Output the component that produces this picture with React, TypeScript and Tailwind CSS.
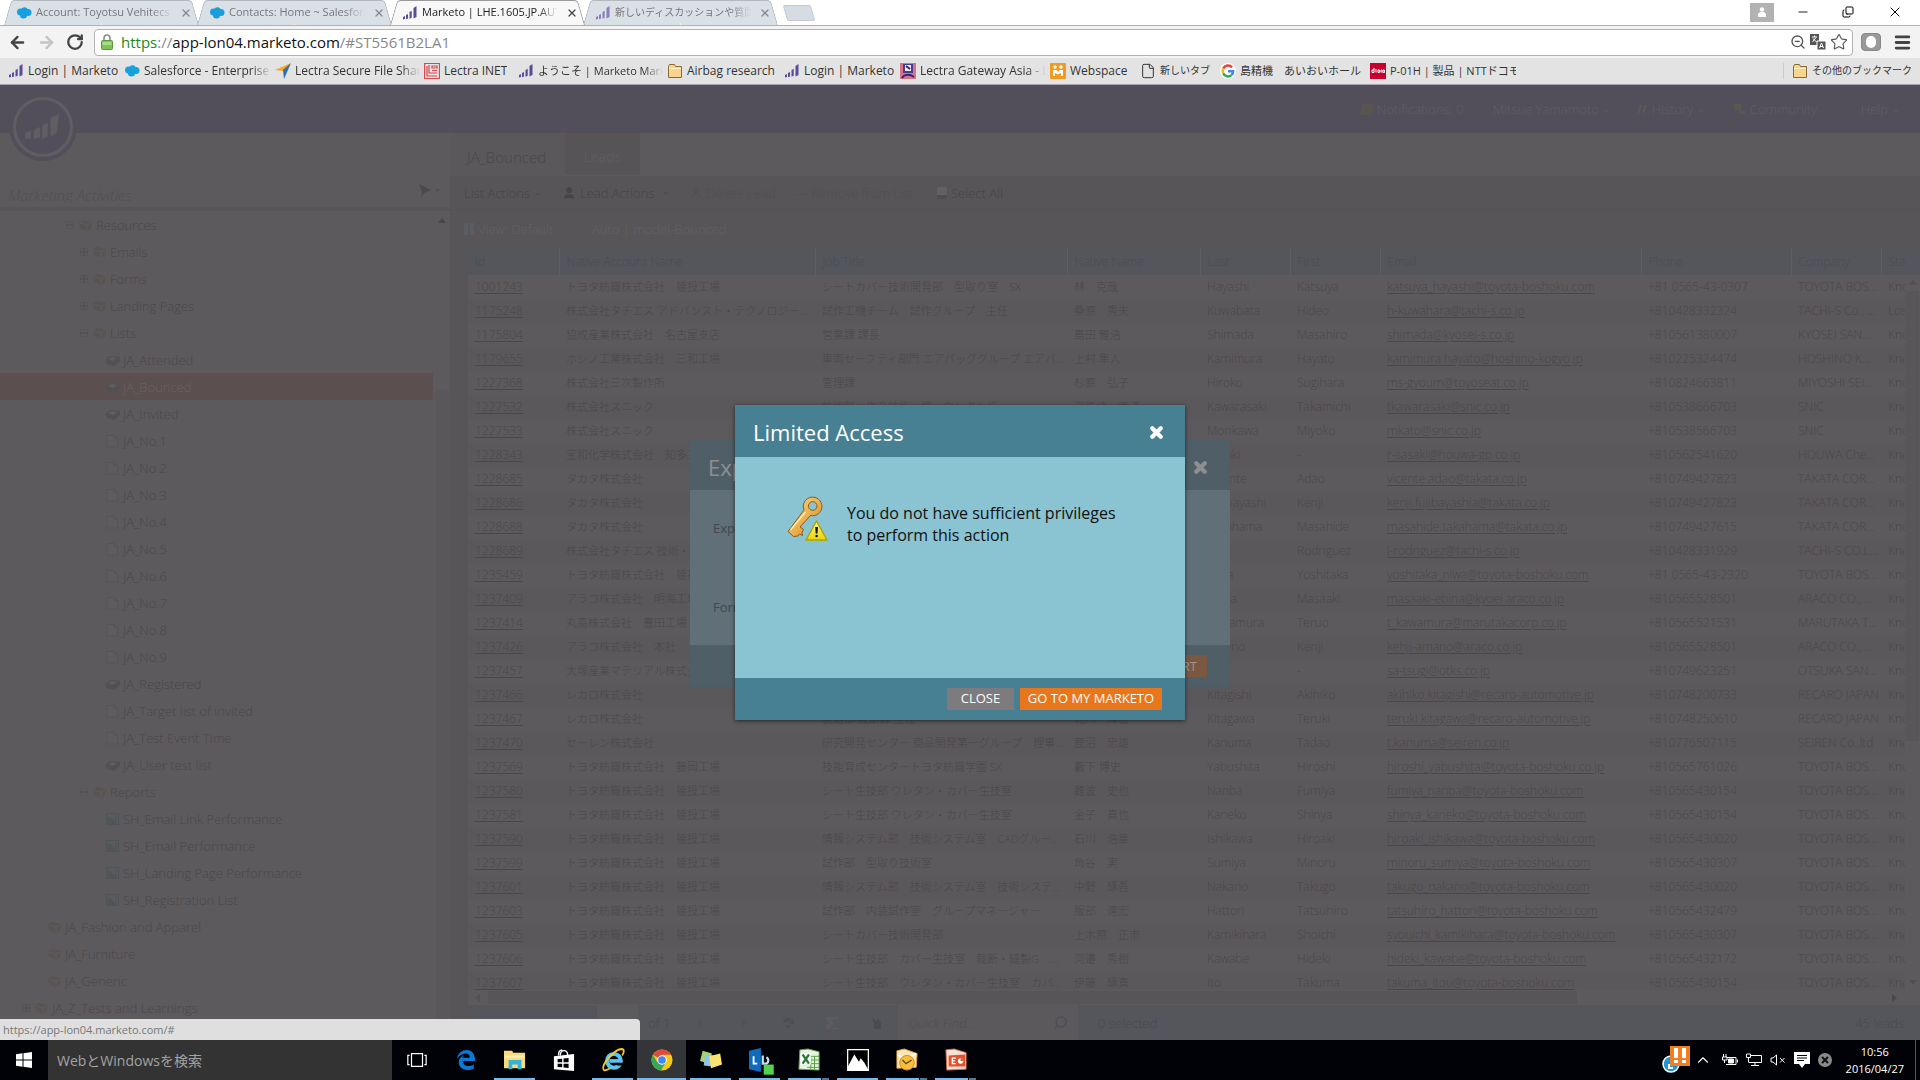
import type { ReactNode } from "react";
import clsx from "clsx";
import {
  ArrowLeft,
  ArrowRight,
  ChevronUp,
  Copy,
  File,
  Menu,
  Minus,
  RotateCw,
  Search,
  Star,
  User,
  X,
  ZoomOut,
} from "lucide-react";

const FADE = "[mask-image:linear-gradient(to_right,#000_85%,transparent)]";

function MarketoIcon({ className }: { className?: string }) {
  return (
    <svg viewBox="0 0 16 16" className={clsx("size-4 shrink-0", className)}>
      <path d="M1 12l2-1v3l-2 .5zM4 10l2-1v4.500l-2 .8zM7.500 7l2.200-1.200v7l-2.200 1zM11.500 3l3-2v11l-3 1.500z" fill="currentColor" />
    </svg>
  );
}

function CloudIcon() {
  return (
    <svg viewBox="0 0 16 16" className="size-4 shrink-0" fill="#1a9fdd">
      <circle cx="4.500" cy="7" r="3.500" />
      <circle cx="8.500" cy="5.500" r="3.200" />
      <circle cx="12" cy="7.500" r="3.500" />
      <circle cx="7.500" cy="10" r="3.600" />
    </svg>
  );
}

function ArrowLogo() {
  return (
    <svg viewBox="0 0 16 16" className="size-4 shrink-0">
      <path d="M0 7L16 0 8 8z" fill="#f5a81c" />
      <path d="M16 0L9 16 8 7z" fill="#2d6fb5" />
    </svg>
  );
}

function LectraIcon() {
  return (
    <svg viewBox="0 0 16 16" className="size-4 shrink-0" fill="none" stroke="#d9484c">
      <path d="M.5.5h15v15H.5zM3 3v10h10M5 2v8h8M8 3h5v2H8zM8 7.500h5" strokeWidth="1.200" />
    </svg>
  );
}

function FolderIcon() {
  return (
    <svg viewBox="0 0 16 16" className="size-4 shrink-0">
      <path d="M1.500 3.500l1-2h5l1 2h6v11h-13z" fill="#f8d48c" stroke="#8a6a34" />
      <path d="M2 5.500h12" stroke="#fff0c8" />
    </svg>
  );
}

function GatewayIcon() {
  return (
    <svg viewBox="0 0 16 16" className="size-4 shrink-0">
      <path d="M0 0h16v16H0z" fill="#d9728a" />
      <path d="M3 1h10v9H3z" fill="#4a3c94" />
      <path d="M5 2h6v6H5z" fill="#f3eef7" />
      <path d="M6 3l4 3M2 15c2-4 8-4 12-1" stroke="#2d2a6e" strokeWidth="2" fill="none" />
    </svg>
  );
}

function WebspaceIcon() {
  return (
    <svg viewBox="0 0 16 16" className="size-4 shrink-0">
      <rect width="16" height="16" rx="1" fill="#f39a1e" />
      <circle cx="5" cy="4" r="1.700" fill="#fff" />
      <circle cx="11" cy="4" r="1.700" fill="#fff" />
      <path d="M3 13V7h3.500L8 9l1.500-2H13v6h-2v-3l-3 1.500L5 10v3z" fill="#fff" />
    </svg>
  );
}

function GoogleIcon() {
  return (
    <svg viewBox="0 0 16 16" className="size-4 shrink-0">
      <circle cx="8" cy="8" r="8" fill="#fff" />
      <g fill="none" strokeWidth="2.500">
        <path d="M12 4.300A5.300 5.300 0 0 0 3.200 5.600" stroke="#ea4335" />
        <path d="M3.200 5.600a5.300 5.300 0 0 0 0 4.800" stroke="#fbbc05" />
        <path d="M3.200 10.400a5.300 5.300 0 0 0 8.300 1.700" stroke="#34a853" />
        <path d="M11.500 12.100A5 5 0 0 0 13.200 8.200H8" stroke="#4285f4" />
      </g>
    </svg>
  );
}

function PhoneShopIcon() {
  return (
    <svg viewBox="0 0 16 16" className="size-4 shrink-0">
      <path d="M0 0h16v16H0z" fill="#c8002f" />
      <path d="M2 9.500V7h2v2.500zM4 5v2M6 6v3.500M8 7v2.500h1.500V7zM11 9.500V7h1v2.500M13 7v2.500h1.500V7z" stroke="#fff" fill="none" />
    </svg>
  );
}

function Caret() {
  return (
    <svg viewBox="0 0 8 8" className="ml-1 inline size-2 opacity-40">
      <path d="M1 3h6L4 6z" fill="currentColor" />
    </svg>
  );
}

const tabs = [
  { title: "Account: Toyotsu Vehitecs", icon: <CloudIcon />, size: "text-[11px]" },
  { title: "Contacts: Home ~ Salesforce", icon: <CloudIcon />, size: "text-[11px]" },
  { title: "Marketo | LHE.1605.JP.AUTO", icon: <MarketoIcon className="text-[#5b4b9a]" />, size: "text-[11px]", active: true },
  { title: "新しいディスカッションや質問を", icon: <MarketoIcon className="text-[#8a7fb8]" />, size: "text-[10px]" },
];

const bookmarks: { title: string; icon: ReactNode; width: string; size?: string }[] = [
  { title: "Login | Marketo", icon: <MarketoIcon className="text-[#5b4b9a]" />, width: "w-[116px]" },
  { title: "Salesforce - Enterprise E", icon: <CloudIcon />, width: "w-[151px]" },
  { title: "Lectra Secure File Sharing", icon: <ArrowLogo />, width: "w-[149px]" },
  { title: "Lectra INET", icon: <LectraIcon />, width: "w-[94px]" },
  { title: "ようこそ | Marketo Market", icon: <MarketoIcon className="text-[#5b4b9a]" />, width: "w-[149px]", size: "text-[11px]" },
  { title: "Airbag research", icon: <FolderIcon />, width: "w-[117px]" },
  { title: "Login | Marketo", icon: <MarketoIcon className="text-[#5b4b9a]" />, width: "w-[116px]" },
  { title: "Lectra Gateway Asia - L", icon: <GatewayIcon />, width: "w-[150px]" },
  { title: "Webspace", icon: <WebspaceIcon />, width: "w-[90px]" },
  { title: "新しいタブ", icon: <File size={16} strokeWidth={1.5} className="shrink-0" />, width: "w-[80px]", size: "text-[10px]" },
  { title: "島精機　あいおいホール", icon: <GoogleIcon />, width: "w-[150px]", size: "text-[11px]" },
  { title: "P-01H | 製品 | NTTドコモ", icon: <PhoneShopIcon />, width: "w-[150px]", size: "text-[11px]" },
];

type TabProps = { title: string; icon: ReactNode; size: string; active?: boolean };

function BrowserTab({ title, icon, size, active }: TabProps) {
  const side = clsx(
    "absolute top-0 h-full w-1/2 border-t",
    active ? "border-[#9a9a9a] bg-[#f8f8f8]" : "border-[#b4b9be] bg-[#d9e0e6]",
  );
  return (
    <div className={clsx("relative h-[25px] w-[193px]", active && "z-10")}>
      <span className={clsx(side, "-left-px origin-bottom -skew-x-[16deg] rounded-tl-sm border-l")} />
      <span className={clsx(side, "right-0 origin-bottom skew-x-[16deg] rounded-tr-sm border-r")} />
      <div className="relative flex h-full items-center pr-1.5 pl-[11px]">
        {icon}
        <span
          className={clsx("ml-1 flex-1 overflow-hidden whitespace-nowrap", FADE, size, active ? "text-[#222]" : "text-[#777]")}
        >
          {title}
        </span>
        <button type="button" aria-label={`Close ${title}`} className={clsx("ml-2", active ? "text-[#444]" : "text-[#888]")}>
          <X size={12} strokeWidth={2.5} />
        </button>
      </div>
    </div>
  );
}

function BrowserChrome() {
  return (
    <header className="shrink-0 text-xs">
      <div className="flex h-[25px] items-start bg-white">
        <nav className="flex pl-[5px]">
          {tabs.map((tab) => (
            <BrowserTab key={tab.title} {...tab} />
          ))}
        </nav>
        <button type="button" aria-label="New tab" className="mt-[5px] ml-2 h-4 w-[28px] skew-x-[16deg] rounded-xs border border-[#c3c9ce] bg-[#d5dce3]" />
        <div className="ml-auto flex items-center">
          <button type="button" aria-label="Profile" className="mr-1.5 flex h-[19px] w-6 items-center justify-center bg-[#b2b2b2] text-white">
            <svg viewBox="0 0 10 10" className="size-[10px]" fill="currentColor">
              <circle cx="5" cy="2.500" r="2.200" />
              <path d="M1 10V7l2-2h4l2 2v3z" />
            </svg>
          </button>
          <button type="button" aria-label="Minimize" className="flex h-6 w-[46px] items-center justify-center">
            <Minus size={14} strokeWidth={1.5} />
          </button>
          <button type="button" aria-label="Restore" className="flex h-6 w-11 items-center justify-center">
            <Copy size={12} strokeWidth={2} className="-scale-y-100" />
          </button>
          <button type="button" aria-label="Close" className="flex h-6 w-[50px] items-center justify-center">
            <X size={16} strokeWidth={1.5} />
          </button>
        </div>
      </div>

      <div className="flex h-[33px] items-center border-t border-[#b0b0b0] bg-[#f3f3f3] pr-2 pl-2">
        <button type="button" aria-label="Back" className="text-[#444]">
          <ArrowLeft size={19} strokeWidth={3} />
        </button>
        <button type="button" aria-label="Forward" className="ml-2.5 text-[#c4c4c4]">
          <ArrowRight size={19} strokeWidth={3} />
        </button>
        <button type="button" aria-label="Reload" className="ml-2.5 text-[#444]">
          <RotateCw size={18} strokeWidth={3} />
        </button>
        <label className="ml-2.5 flex h-[27px] flex-1 items-center rounded-sm border border-[#b2b2b2] bg-white pr-1 pl-1.5">
          <svg viewBox="0 0 12 16" className="h-4 w-3">
            <path d="M3 7V4a3 3 0 0 1 6 0v3" fill="none" stroke="#8a8f8a" strokeWidth="1.600" />
            <rect x=".5" y="6.500" width="11" height="9" rx="1" fill="#7cc454" stroke="#5a9a3c" />
            <path d="M1.500 8h9v3h-9z" fill="#a8de88" />
          </svg>
          <span className="sr-only">Address</span>
          <span className="ml-2 flex-1 text-[15px] text-[#888]">
            <span className="text-[#1a8a1a]">https</span>://<span className="text-[#111]">app-lon04.marketo.com</span>/#ST5561B2LA1
          </span>
          <ZoomOut size={16} className="text-[#555]" />
          <svg viewBox="0 0 16 16" className="ml-1 size-4">
            <path d="M0 0h9v11H0z" fill="#555" />
            <path d="M7 7h9v9H7z" fill="#555" stroke="#fff" />
            <path d="M2 3h5M4.500 1.500v1.500M2.500 8L6 3.500M3 4.500L6.500 8" stroke="#fff" fill="none" />
            <path d="M9.500 14l2-5 2 5M10 12.500h3" stroke="#fff" fill="none" />
          </svg>
          <Star size={18} strokeWidth={1.5} className="ml-1 text-[#555]" />
        </label>
        <button type="button" aria-label="Extension" className="ml-2 flex h-[18px] w-5 items-center justify-center rounded-sm border border-[#888] bg-[#999]">
          <span className="h-3 w-2.5 rounded-full bg-white" />
        </button>
        <button type="button" aria-label="Menu" className="ml-3 text-[#444]">
          <Menu size={19} strokeWidth={3.5} />
        </button>
      </div>

      <nav className="flex h-[27px] items-center border-b border-[#a8a8a8] bg-[#e3e3e3] pl-2 text-[#333]">
        {bookmarks.map(({ title, icon, width, size }, i) => (
          <a key={i} href="#" className={clsx("flex items-center gap-1", width, size)}>
            {icon}
            <span className={clsx("mr-1 overflow-hidden whitespace-nowrap", title.length > 20 && FADE)}>{title}</span>
          </a>
        ))}
        <a href="#" className="mr-2 ml-auto flex items-center gap-1 border-l border-[#ccc] pl-2 text-[10px] whitespace-nowrap">
          <FolderIcon />
          その他のブックマーク
        </a>
      </nav>
    </header>
  );
}

type TreeKind = "folder" | "smart" | "list" | "report";
const tree: { label: string; indent: string; kind: TreeKind; toggle?: "+" | "-"; selected?: boolean }[] = [
  { label: "Resources", indent: "pl-[66px]", kind: "folder", toggle: "-" },
  { label: "Emails", indent: "pl-[80px]", kind: "folder", toggle: "+" },
  { label: "Forms", indent: "pl-[80px]", kind: "folder", toggle: "+" },
  { label: "Landing Pages", indent: "pl-[80px]", kind: "folder", toggle: "+" },
  { label: "Lists", indent: "pl-[80px]", kind: "folder", toggle: "-" },
  { label: "JA_Attended", indent: "pl-[105px]", kind: "smart" },
  { label: "JA_Bounced", indent: "pl-[105px]", kind: "smart", selected: true },
  { label: "JA_Invited", indent: "pl-[105px]", kind: "smart" },
  { label: "JA_No.1", indent: "pl-[105px]", kind: "list" },
  { label: "JA_No.2", indent: "pl-[105px]", kind: "list" },
  { label: "JA_No.3", indent: "pl-[105px]", kind: "list" },
  { label: "JA_No.4", indent: "pl-[105px]", kind: "list" },
  { label: "JA_No.5", indent: "pl-[105px]", kind: "list" },
  { label: "JA_No.6", indent: "pl-[105px]", kind: "list" },
  { label: "JA_No.7", indent: "pl-[105px]", kind: "list" },
  { label: "JA_No.8", indent: "pl-[105px]", kind: "list" },
  { label: "JA_No.9", indent: "pl-[105px]", kind: "list" },
  { label: "JA_Registered", indent: "pl-[105px]", kind: "smart" },
  { label: "JA_Target list of invited", indent: "pl-[105px]", kind: "list" },
  { label: "JA_Test Event TIme", indent: "pl-[105px]", kind: "list" },
  { label: "JA_User test list", indent: "pl-[105px]", kind: "smart" },
  { label: "Reports", indent: "pl-[80px]", kind: "folder", toggle: "-" },
  { label: "SH_Email Link Performance", indent: "pl-[105px]", kind: "report" },
  { label: "SH_Email Performance", indent: "pl-[105px]", kind: "report" },
  { label: "SH_Landing Page Performance", indent: "pl-[105px]", kind: "report" },
  { label: "SH_Registration List", indent: "pl-[105px]", kind: "report" },
  { label: "JA_Fashion and Apparel", indent: "pl-[47px]", kind: "folder" },
  { label: "JA_Furniture", indent: "pl-[47px]", kind: "folder" },
  { label: "JA_Generic", indent: "pl-[47px]", kind: "folder" },
  { label: "JA_Z_Tests and Learnings", indent: "pl-[22px]", kind: "folder", toggle: "+" },
];

function TreeIcon({ kind }: { kind: TreeKind }) {
  return (
    <svg viewBox="0 0 15 14" className="h-[14px] w-[15px] shrink-0">
      {kind === "folder" && (
        <>
          <path d="M1 4l4-2 9 2-1 7-4 2-7-3z" fill="#585454" />
          <path d="M2 5l7 2 4-2M9 7v5" stroke="#615d5b" fill="none" />
        </>
      )}
      {kind === "smart" && (
        <>
          <path d="M0 7l5-4 10 1v4l-6 5-7-2z" fill="#525052" />
          <path d="M3 6l4-2 5 1-4 3z" fill="#605d60" />
        </>
      )}
      {kind === "list" && <path d="M2 1.500h7l3.500 3v8.500H2zM9 1.500v3h3.500" stroke="#575455" fill="#5f5c5d" />}
      {kind === "report" && (
        <>
          <path d="M1.500 1.500h12v11h-12z" stroke="#535255" fill="#595b5e" />
          <path d="M3 5l3 1 4 4v2H3zM11 3v9" stroke="#505558" fill="#4f5659" />
        </>
      )}
    </svg>
  );
}

function Sidebar() {
  return (
    <aside className="flex w-[450px] shrink-0 flex-col bg-[#5d5a5d]">
      <div className="flex h-[78px] items-end justify-between border-b-4 border-[#585558] px-2 pb-1">
        <input
          aria-label="Search tree"
          placeholder="Marketing Activities"
          className="w-60 bg-transparent text-[15px] font-light italic placeholder:text-[#524f52]"
        />
        <button type="button" aria-label="Filter" className="mb-1 flex items-center">
          <svg viewBox="0 0 24 16" className="h-4 w-6">
            <path d="M1 1l12 6-7 3-3 5 1-6z" fill="#4c494c" />
            <path d="M17 6h5l-2.500 3z" fill="#514e51" />
          </svg>
        </button>
      </div>
      <div className="flex min-h-0 flex-1">
        <ul className="min-w-0 flex-1 overflow-hidden text-[13px] font-light text-[#4a474a]">
          {tree.map(({ label, indent, kind, toggle, selected }) => (
            <li
              key={label}
              className={clsx(
                "mr-px flex h-[27px] items-center",
                indent,
                selected && "rounded-r-xs bg-[#5c4f4f] text-[#676365]",
              )}
            >
              {toggle && (
                <button type="button" aria-label={`Toggle ${label}`} className="mr-1 flex size-2 items-center justify-center text-[#504d50]">
                  <svg viewBox="0 0 8 8" className="size-2" fill="none" stroke="currentColor">
                    <path d={toggle === "+" ? "M0 4h8M4 0v8" : "M0 4h8"} />
                    <path d="M.5.5h7v7h-7z" opacity=".4" />
                  </svg>
                </button>
              )}
              <TreeIcon kind={kind} />
              <span className="ml-[3px]">{label}</span>
            </li>
          ))}
        </ul>
        <div className="flex w-4 flex-col items-center">
          <svg viewBox="0 0 8 8" className="mt-1.5 size-2" fill="#494649">
            <path d="M4 1l4 5H0z" />
          </svg>
          <span className="mt-[165px] w-[13px] flex-1 bg-[#5a575a]" />
        </div>
      </div>
    </aside>
  );
}

const columns = [
  ["Id", "w-[91px]"],
  ["Native Account Name", "w-[256px]"],
  ["Job Title", "w-[252px]"],
  ["Native Name", "w-[133px]"],
  ["Last", "w-[90px]"],
  ["First", "w-[90px]"],
  ["Email", "w-[261px]"],
  ["Phone", "w-[150px]"],
  ["Company", "w-[90px]"],
  ["Status", ""],
];

const TB = "トヨタ紡織株式会社　猿投工場";
const leads = [
  ["1001243", TB, "シートカバー技術開発部　型取り室　SX", "林　克哉", "Hayashi", "Katsuya", "katsuya_hayashi@toyota-boshoku.com", "+81 0565-43-0307", "TOYOTA BOSHOKU", "Known"],
  ["1175248", "株式会社タチエス アドバンスト・テクノロジー・センター", "試作工機チーム　試作グループ　主任", "桑原　秀夫", "Kuwabata", "Hideo", "h-kuwahara@tachi-s.co.jp", "+810428332324", "TACHI-S Co., Ltd.", "Lost"],
  ["1175804", "協成産業株式会社　名古屋支店", "営業課 課長", "島田 雅浩", "Shimada", "Masahiro", "shimada@kyosei-s.co.jp", "+810561380007", "KYOSEI SANGYO", "Known"],
  ["1179655", "ホシノ工業株式会社　三和工場", "車両セーフティ部門 エアバッググループ エアバッグ課", "上村 隼人", "Kamimura", "Hayato", "kamimura.hayato@hoshino-kogyo.jp", "+810225324474", "HOSHINO KOGYO", "Known"],
  ["1227368", "株式会社三次製作所", "管理課", "杉原　弘子", "Hiroko", "Sugihara", "ms-gyoum@toyoseat.co.jp", "+810824663811", "MIYOSHI SEISAKUSHO", "Known"],
  ["1227532", "株式会社スニック", "技術部　生産技術一課　ウレタン係", "河原崎　孝道", "Kawarasaki", "Takamichi", "tkawarasaki@snic.co.jp", "+810538666703", "SNIC", "Known"],
  ["1227533", "株式会社スニック", "", "", "Morikawa", "Miyoko", "mkato@snic.co.jp", "+810538566703", "SNIC", "Known"],
  ["1228343", "宝和化学株式会社　知多工場", "", "", "Sasaki", "-", "r-sasaki@houwa-gp.co.jp", "+810562541620", "HOUWA Chemical", "Known"],
  ["1228685", "タカタ株式会社", "", "", "Vicente", "Adao", "vicente.adao@takata.co.jp", "+810749427823", "TAKATA CORPORATION", "Known"],
  ["1228686", "タカタ株式会社", "", "", "Fujibayashi", "Kenji", "kenji.fujibayashia@takata.co.jp", "+810749427823", "TAKATA CORPORATION", "Known"],
  ["1228688", "タカタ株式会社", "", "", "Takahama", "Masahide", "masahide.takahama@takata.co.jp", "+810749427615", "TAKATA CORPORATION", "Known"],
  ["1228689", "株式会社タチエス 技術・モノづくりセンター", "", "", "J", "Rodriguez", "j-rodriguez@tachi-s.co.jp", "+810428331929", "TACHI-S CO.LTD", "Known"],
  ["1235459", TB, "", "", "Niwa", "Yoshitaka", "yoshitaka_niwa@toyota-boshoku.com", "+81 0565-43-2320", "TOYOTA BOSHOKU", "Known"],
  ["1237409", "アラコ株式会社　明海工場", "", "", "Ebina", "Masaaki", "masaaki-ebina@kyoei.araco.co.jp", "+810565528501", "ARACO CO., LTD", "Known"],
  ["1237414", "丸高株式会社　豊田工場", "", "", "Kawamura", "Teruo", "t_kawamura@marutakacorp.co.jp", "+810565521531", "MARUTAKA TOYOTA", "Known"],
  ["1237426", "アラコ株式会社　本社", "", "", "Amano", "Kenji", "kehji-amano@araco.co.jp", "+810565528501", "ARACO CO., LTD", "Known"],
  ["1237457", "大塚産業マテリアル株式会社", "", "", "Sa", "-", "sa-tsugi@otks.co.jp", "+810749623251", "OTSUKA SANGYO", "Known"],
  ["1237466", "レカロ株式会社", "", "", "Kitagishi", "Akihiko", "akihiko.kitagishi@recaro-automotive.jp", "+810748200733", "RECARO JAPAN", "Known"],
  ["1237467", "レカロ株式会社", "製造部 裁断課 主任", "北川　輝樹", "Kitagawa", "Teruki", "teruki.kitagawa@recaro-automotive.jp", "+810748250610", "RECARO JAPAN", "Known"],
  ["1237470", "セーレン株式会社", "研究開発センター 商品開発第一グループ　理事補佐", "鹿沼　忠雄", "Kanuma", "Tadao", "t.kanuma@seiren.co.jp", "+810776507115", "SEIREN Co.,ltd", "Known"],
  ["1237569", "トヨタ紡織株式会社　藤岡工場", "技能育成センタートヨタ紡織学園 SX", "藪下 博史", "Yabushita", "Hiroshi", "hiroshi_yabushita@toyota-boshoku.co.jp", "+810565761026", "TOYOTA BOSHOKU", "Known"],
  ["1237580", TB, "シート生技部 ウレタン・カバー生技室", "難波　史也", "Nanba", "Fumiya", "fumiya_nanba@toyota-boshoku.com", "+810565430154", "TOYOTA BOSHOKU", "Known"],
  ["1237581", TB, "シート生技部 ウレタン・カバー生技室", "金子　真也", "Kaneko", "Shinya", "shinya_kaneko@toyota-boshoku.com", "+810565430154", "TOYOTA BOSHOKU", "Known"],
  ["1237590", TB, "情報システム部　技術システム室　CADグループ長", "石川　浩章", "Ishikawa", "Hiroaki", "hiroaki_ishikawa@toyota-boshoku.com", "+810565430020", "TOYOTA BOSHOKU", "Known"],
  ["1237599", TB, "試作部　型取り技術室", "角谷　実", "Sumiya", "Minoru", "minoru_sumiya@toyota-boshoku.com", "+810565430307", "TOYOTA BOSHOKU", "Known"],
  ["1237601", TB, "情報システム部　技術システム室　技術システムグループ", "中野　琢吾", "Nakano", "Takugo", "takugo_nakano@toyota-boshoku.com", "+810565430020", "TOYOTA BOSHOKU", "Known"],
  ["1237603", TB, "試作部　内装試作室　グループマネージャー", "服部　達宏", "Hattori", "Tatsuhiro", "tatsuhiro_hattori@toyota-boshoku.com", "+810565432479", "TOYOTA BOSHOKU", "Known"],
  ["1237605", TB, "シートカバー技術開発部", "上木原　正市", "Kamikihara", "Shoichi", "syouichi_kamikihara@toyota-boshoku.com", "+810565430307", "TOYOTA BOSHOKU", "Known"],
  ["1237606", TB, "シート生技部　カバー生技室　裁断・縫製G　グループ長", "河邉　秀樹", "Kawabe", "Hideki", "hideki_kawabe@toyota-boshoku.com", "+810565432172", "TOYOTA BOSHOKU", "Known"],
  ["1237607", TB, "シート生技部　ウレタン・カバー生技室　カバーグループ", "伊藤　琢真", "Ito", "Takuma", "takuma_itou@toyota-boshoku.com", "+810565430154", "TOYOTA BOSHOKU", "Known"],
];

function LeadGrid() {
  return (
    <div className="flex min-h-0 flex-1 overflow-hidden bg-[#5d5a5d]">
      <div className="min-w-0 flex-1 overflow-hidden">
        <table className="w-full table-fixed border-collapse text-xs font-light whitespace-nowrap text-[#4a474a]">
          <thead>
            <tr className="h-[27px] bg-[#54565b] text-[#4a4b50]">
              {columns.map(([name, width]) => (
                <th
                  key={name}
                  className={clsx("overflow-hidden border-l border-[#5d5f64] pl-[7px] text-left font-light first:border-l-0", width)}
                >
                  {name}
                </th>
              ))}
            </tr>
          </thead>
          <tbody>
            {leads.map((lead) => (
              <tr key={lead[0]} className="h-6 even:bg-[#5b585b]">
                {lead.map((value, i) => (
                  <td
                    key={i}
                    className={clsx(
                      "overflow-hidden pr-0.5 pl-[7px]",
                      i < 9 && "text-ellipsis",
                      i > 0 && i < 4 && "text-[11px]",
                    )}
                  >
                    {i === 0 || i === 6 ? (
                      <a href="#" className="underline underline-offset-2">
                        {value}
                      </a>
                    ) : (
                      value
                    )}
                  </td>
                ))}
              </tr>
            ))}
          </tbody>
        </table>
      </div>
      <div className="flex w-[15px] flex-col items-center text-[#534f53]">
        <span className="h-[27px] w-full shrink-0 bg-[#54565b]" />
        <svg viewBox="0 0 8 8" className="my-1 size-2" fill="currentColor">
          <path d="M4 1l4 5H0z" />
        </svg>
        <span className="h-[450px] w-[13px] bg-[#595659]" />
        <svg viewBox="0 0 8 8" className="mt-auto mb-1 size-2" fill="currentColor">
          <path d="M0 2h8L4 7z" />
        </svg>
      </div>
    </div>
  );
}

function FooterIcon({ label, d, fill }: { label: string; d: string; fill: string }) {
  return (
    <button type="button" aria-label={label} className="flex w-11 justify-center">
      <svg viewBox="0 0 14 14" className="size-[14px]">
        <path d={d} fill={fill} />
      </svg>
    </button>
  );
}

function Workspace() {
  return (
    <section className="flex min-w-0 flex-1 flex-col bg-[#585558]">
      <div className="flex h-[43px] items-start bg-[#5d5a5d] font-light text-[#494649]">
        <span className="flex h-full w-[115px] items-center bg-[#5b585b] pt-1 pl-[17px] text-[15px]">JA_Bounced</span>
        <button type="button" className="h-[42px] w-[75px] border-t-2 border-[#5f5150] bg-[#575457] pt-1 text-sm font-normal text-[#5e5b5e]">
          Leads
        </button>
      </div>
      <div className="flex h-[34px] items-center border-b border-[#555255] pl-[14px] text-[13px] font-light text-[#474447]">
        <button type="button" className="w-[98px] text-left">
          List Actions
          <Caret />
        </button>
        <button type="button" className="flex w-32 items-center gap-1">
          <User size={14} fill="currentColor" /> Lead Actions
          <Caret />
        </button>
        <button type="button" disabled className="flex w-[105px] items-center gap-1 text-[#524f52]">
          <User size={12} /> Delete Lead
        </button>
        <button type="button" disabled className="w-[142px] text-left text-[#524f52]">
          — Remove from List
        </button>
        <label className="flex items-center gap-1">
          <input
            type="checkbox"
            defaultChecked
            className="h-3 w-2.5 appearance-none rounded-xs bg-[#636063] checked:border-b-4 checked:border-[#504d50]"
          />
          Select All
        </label>
      </div>
      <div className="flex h-[38px] items-center pl-[14px] text-[13px] font-light text-[#646164]">
        <button type="button" className="flex w-[128px] items-center gap-1">
          <span className="h-3 w-2.5 border-x-4 border-[#5a5d65]" />
          View: Default
        </button>
        <span>Auto | model-Bounced</span>
      </div>
      <div className="flex min-h-0 flex-1 flex-col pl-[18px]">
        <LeadGrid />
        <div className="flex h-[15px] items-center bg-[#5d5a5d]">
          <svg viewBox="0 0 8 8" className="mx-1.5 size-2" fill="#545154">
            <path d="M6 0v8L1 4z" />
          </svg>
          <span className="h-[13px] w-3/4 bg-[#585558]" />
          <svg viewBox="0 0 8 8" className="mr-[22px] ml-auto size-2" fill="#494649">
            <path d="M2 0v8l5-4z" />
          </svg>
        </div>
        <div className="flex h-[35px] items-center bg-[#54565b] text-[13px] font-light text-[#494a4e]">
          <input aria-label="Page" defaultValue="" className="ml-[129px] h-full w-[41px] bg-[#5b5a5d]" />
          <span className="w-10 pl-2.5">of 1</span>
          <FooterIcon label="Next page" d="M5 3l5 4-5 4z" fill="#505257" />
          <FooterIcon label="Last page" d="M5 3l5 4-5 4z" fill="#505257" />
          <FooterIcon label="Refresh" d="M2 6a5 5 0 0 1 9-2l2-1v5H8l2-2a3 3 0 0 0-5 1zM4 9h6l-3 4z" fill="#4d4f54" />
          <FooterIcon label="Export" d="M1 1h12v2H6l3 4-3 5h7v1H1V9l3-2-3-3z" fill="#5e5a5f" />
          <FooterIcon label="Assign" d="M3 1l4 4 2-3 3 5v6H5V8z" fill="#4b4a4f" />
          <label className="flex h-full w-[180px] items-center bg-[#5b595c] px-2.5">
            <input aria-label="Quick find" placeholder="Quick Find..." className="min-w-0 flex-1 bg-transparent italic placeholder:text-[#524f52]" />
            <Search size={15} className="-scale-x-100 text-[#4d4c58]" />
          </label>
          <span className="pl-5">0 selected</span>
          <span className="mr-4 ml-auto">45 leads</span>
        </div>
      </div>
    </section>
  );
}

function TopNav() {
  return (
    <div className="flex h-12 shrink-0 items-center bg-[#524f5a] text-[13px] font-light text-[#605d69]">
      <div className="relative z-10 mt-9 ml-[9px] flex size-[68px] items-center justify-center rounded-full bg-[#524f5a]">
        <div className="flex size-[60px] items-center justify-center rounded-full border-[3px] border-[#605d63]">
          <svg viewBox="0 0 40 30" className="h-[28px] w-[38px]" fill="#605d63">
            <path d="M1 21l6-2v8l-6 1zM10 19l2-2 5-2v11l-7 2zM19 14l6-4v15l-6 3zM28 5l9-4-2 20-7 4z" />
          </svg>
        </div>
      </div>
      <nav className="mr-5 ml-auto flex items-center">
        <a href="#" className="flex w-[132px] items-center gap-1">
          <span className="h-[11px] w-3 -skew-x-12 bg-[#58554f]" />
          Notifications: 0
        </a>
        <a href="#" className="w-[143px]">
          Mitsue Yamamoto
          <Caret />
        </a>
        <a href="#" className="flex w-[98px] items-center gap-1">
          <svg viewBox="0 0 12 12" className="size-3" stroke="#585b55" strokeWidth="2">
            <path d="M2 10l3-8M7 10l3-8" />
          </svg>
          <span>
            History
            <Caret />
          </span>
        </a>
        <a href="#" className="flex w-[127px] items-center gap-1">
          <svg viewBox="0 0 12 12" className="size-3" fill="#5a5751">
            <path d="M0 1h7v6H3L1 9V7H0zM5 8h6v3H5z" />
          </svg>
          Community
        </a>
        <a href="#">
          Help
          <Caret />
        </a>
      </nav>
    </div>
  );
}

function KeyWarningIcon() {
  return (
    <svg viewBox="0 0 42 48" className="h-[48px] w-[42px] shrink-0">
      <defs>
        <linearGradient id="gold" x1="0" y1="0" x2="1" y2="1">
          <stop offset="0" stopColor="#fbe08a" />
          <stop offset="1" stopColor="#d98418" />
        </linearGradient>
        <linearGradient id="warn" x1="0" y1="0" x2="0" y2="1">
          <stop offset="0" stopColor="#fdf8a0" />
          <stop offset="1" stopColor="#e9d400" />
        </linearGradient>
      </defs>
      <path
        d="M17 16a9.300 9.300 0 1 1 6.500 5.500L13 33l3.500 2.500-1.500 3 .5 3-3-1.500-1.500 2-4.500.5L1 37.500z"
        fill="url(#gold)"
        stroke="#8f5a17"
      />
      <circle cx="25.700" cy="12" r="4.300" fill="#8ac3d2" stroke="#8f5a17" />
      <path d="M18.500 18L3.500 36" stroke="#fdeab0" strokeWidth="1.500" />
      <path d="M29.500 27L40 46H19z" fill="url(#warn)" stroke="#b0a400" strokeLinejoin="round" strokeWidth="1.500" />
      <path d="M28.200 33h2.800l-.5 6.500h-1.800z" fill="#111" />
      <circle cx="29.600" cy="42" r="1.300" fill="#111" />
    </svg>
  );
}

function ExportDialog() {
  return (
    <div className="absolute inset-0 flex items-center justify-center pt-0.5">
      <div className="w-[540px] text-[#8f8f93]">
        <div className="flex h-[50px] items-center justify-between bg-[#505e67] pt-1 pr-[21px] pl-[18px] text-[22px]">
          Export List
          <X size={17} strokeWidth={6} />
        </div>
        <div className="h-[155px] bg-[#606f78] px-[23px] pt-7 text-[13px] text-[#40484e]">
          <p className="mb-[59px] leading-5">Export:</p>
          <p className="leading-5">Format:</p>
        </div>
        <div className="flex h-[42px] items-center justify-end bg-[#505e67] pr-[23px]">
          <button type="button" className="h-[22px] rounded-xs bg-[#7b5842] px-2.5 text-[13px] leading-5 text-[#9c9490]">
            EXPORT
          </button>
        </div>
      </div>
    </div>
  );
}

function LimitedAccessDialog() {
  return (
    <div className="absolute inset-0 z-20 flex items-center justify-center">
      <div role="dialog" aria-labelledby="dialog-title" className="w-[450px] bg-[#8ac3d2] shadow-[0_1px_4px_rgba(0,0,0,0.6)]">
        <div className="flex h-[52px] items-center justify-between bg-[#478092] pt-0.5 pr-5 pl-[18px] text-white">
          <h1 id="dialog-title" className="text-[22px]">
            Limited Access
          </h1>
          <button type="button" aria-label="Close dialog">
            <X size={17} strokeWidth={6} />
          </button>
        </div>
        <div className="flex h-[221px] gap-[18px] pt-[37px] pl-[52px]">
          <KeyWarningIcon />
          <p className="max-w-[280px] pt-2 text-base leading-[22px] text-[#111]">
            You do not have sufficient privileges to perform this action
          </p>
        </div>
        <div className="flex h-[42px] items-center justify-end gap-1.5 bg-[#478092] pr-[23px] text-[13px] leading-5 text-white">
          <button type="button" className="h-[22px] w-[67px] bg-[#7d7b7e] pb-0.5">
            CLOSE
          </button>
          <button type="button" className="h-[22px] w-[142px] bg-[#e8761a] pb-0.5 whitespace-nowrap">
            GO TO MY MARKETO
          </button>
        </div>
      </div>
    </div>
  );
}

const taskbarApps: { name: string; open?: boolean; active?: boolean; stacked?: boolean; icon: ReactNode }[] = [
  {
    name: "Task view",
    icon: (
      <g fill="none" stroke="#fff" strokeWidth="1.300">
        <path d="M6 5h12v14H6zM4 7H2v10h2M20 7h2v10h-2" />
      </g>
    ),
  },
  {
    name: "Edge",
    icon: (
      <path
        d="M2 11C3 4 8 1 12.500 1 19 1 22 6 22 13H8.500c0 4 3.500 5.500 6 5.500 2.500 0 4.500-.7 6-1.700v4.500C18.500 22.500 16 23 13.500 23 7 23 4 18.500 4 14.500 4 11 6 8.500 9 7c-.5 1-1 2-.8 2.600h8C16.200 6.500 14.500 5 11.500 5 8 5 4.500 7.500 2 11z"
        fill="#0a78d4"
      />
    ),
  },
  {
    name: "Explorer",
    open: true,
    icon: (
      <>
        <path d="M0 2h9l1 2h13v17H0z" fill="#f8d97c" />
        <path d="M1 7h21v3H1z" fill="#fdeab0" />
        <path d="M5 22V12h14v10h-4v-5H9v5z" fill="#35b4d8" />
      </>
    ),
  },
  {
    name: "Store",
    icon: (
      <>
        <path d="M8 7c0-7 8-7 8 0M6 7c0-4 2-6 4-6" fill="none" stroke="#fff" strokeWidth="1.500" />
        <path d="M1 8l22-2.500V24L1 22z" fill="#fff" />
        <path d="M5 11l5-.5V14.500H5zM11.500 10.300l5.500-.5v4.700h-5.500zM5 16h5v4l-5-.5zM11.500 16H17v4.700l-5.500-.6z" fill="#000" />
      </>
    ),
  },
  {
    name: "Internet Explorer",
    open: true,
    icon: (
      <>
        <circle cx="13" cy="13" r="7.500" fill="none" stroke="#5cc4f0" strokeWidth="4.500" />
        <path d="M8 13h14" stroke="#5cc4f0" strokeWidth="4" />
        <path d="M16 16.500h8" stroke="#000208" strokeWidth="3" />
        <path d="M2 23C-2 18 13 1 21 0c4 0 3 4 1 7M2 23c2 1 5-1 7-2" fill="none" stroke="#f3c92d" strokeWidth="2" />
      </>
    ),
  },
  {
    name: "Chrome",
    open: true,
    active: true,
    icon: (
      <>
        <circle cx="12" cy="12" r="11.500" fill="#f6c915" />
        <path d="M12 12L2.100 6.200A11.500 11.500 0 0 1 21.900 6.200H12z" fill="#dd4b3e" />
        <path d="M12 12L7 14.500 2.100 6.200A11.500 11.500 0 0 0 11 23.400l5-8.900z" fill="#3aa757" />
        <circle cx="12" cy="12" r="5.200" fill="#fff" />
        <circle cx="12" cy="12" r="4.200" fill="#4286f5" />
      </>
    ),
  },
  {
    name: "Sticky Notes",
    open: true,
    icon: (
      <>
        <path d="M3 2l10 3-3 11L0 13z" fill="#a4d477" />
        <path d="M6 6l9 1-1 12-10-1z" fill="#8fc5ea" />
        <path d="M10 8l12-3 2 12-12 4z" fill="#fae36f" />
      </>
    ),
  },
  {
    name: "Lync",
    open: true,
    icon: (
      <>
        <path d="M0 2l13-3v26L0 22z" fill="#0f6cbd" />
        <path d="M5 8v8h4" stroke="#fff" strokeWidth="2" fill="none" />
        <path d="M15 7v9h4a4 4 0 0 0 0-7" fill="none" stroke="#c9dff2" strokeWidth="2.500" />
        <path d="M16 17h11v11H16z" fill="#55d24f" />
      </>
    ),
  },
  {
    name: "Excel",
    open: true,
    stacked: true,
    icon: (
      <>
        <path d="M2 1l9-1 12 3v20l-22-1z" fill="#e6f3e0" stroke="#5fa64c" />
        <path d="M10 8h13M10 12h13M10 16h13M10 20h13M14 8v14M18 8v14" stroke="#4d9a3c" />
        <path d="M3 5l11-1v13H3z" fill="#fff" />
        <path d="M5 6l7 10M12 6L5 16" stroke="#2c7a35" strokeWidth="2.500" />
      </>
    ),
  },
  {
    name: "Photos",
    open: true,
    icon: (
      <>
        <path d="M.7.7h22.600v22.600H.7z" fill="#000" stroke="#fff" strokeWidth="1.400" />
        <path d="M1 19l7-13 5 8 2-4 4 5 4 7v2H1z" fill="#fff" />
      </>
    ),
  },
  {
    name: "Outlook",
    open: true,
    stacked: true,
    icon: (
      <>
        <path d="M1 2l8-2 14 5-1 15-21 1z" fill="#fbe7b5" stroke="#eda336" />
        <path d="M2 6l8 5 12-6" stroke="#fff" strokeWidth="2" fill="none" />
        <circle cx="12" cy="15" r="8" fill="#f6c03c" stroke="#cf8513" />
        <path d="M7 12l4 4 6-4" fill="none" stroke="#6f4a12" strokeWidth="1.500" />
      </>
    ),
  },
  {
    name: "PowerPoint",
    open: true,
    stacked: true,
    icon: (
      <>
        <path d="M1 1l9-1 13 4v18l-21 1z" fill="#f9e0d6" stroke="#dc6d44" />
        <path d="M4 7l18-1v13H4z" fill="#e0522a" />
        <path d="M12 10H8v6h4M8 13h3" stroke="#fff" strokeWidth="1.500" fill="none" />
        <circle cx="17" cy="13" r="3" fill="#fff" />
        <path d="M17 13v-3a3 3 0 0 1 3 3z" fill="#e0522a" />
      </>
    ),
  },
];

function Tray() {
  return (
    <div className="ml-auto flex items-center text-white">
      <svg viewBox="0 0 28 28" className="size-7">
        <circle cx="9" cy="18" r="8" fill="#2196d6" stroke="#fff" strokeWidth="1.500" />
        <path d="M7 18v4h4" stroke="#fff" strokeWidth="2" fill="none" />
        <path d="M8 0h20v20H8z" fill="#f07f23" />
        <path d="M12 2h4v10h-4zM20 2h4v10h-4zM12 14h4v3h-4zM20 14h4v3h-4z" fill="#fff" />
      </svg>
      <ChevronUp size={18} strokeWidth={1.5} className="mx-1" />
      <svg viewBox="0 0 16 12" className="ml-1.5 h-3 w-4" fill="none" stroke="#fff">
        <path d="M5 3.500h9v7H4M15.500 5.500v3M1.500 0v3M4 0v3M.5 3h4.500v3H.5zM2.500 6v3" />
        <path d="M6.500 5h5v4h-5z" fill="#fff" />
      </svg>
      <svg viewBox="0 0 16 14" className="ml-2 h-[14px] w-4" fill="none" stroke="#fff">
        <path d="M4 2.500h11.500v7H3M9 9.500v3M5 12.500h8M.5 1h4v3.500h-4zM2.500 4.500v5" />
      </svg>
      <svg viewBox="0 0 16 14" className="ml-2 h-[14px] w-4" fill="none" stroke="#fff">
        <path d="M1 5h2l3.500-3v10L3 9H1zM10 5l4.500 4.500M14.500 5L10 9.500" />
      </svg>
      <svg viewBox="0 0 16 16" className="ml-2 size-4">
        <path d="M0 0h16v12H11l-3 4-3-4H0z" fill="#fff" />
        <path d="M3 3.500h10M3 6h10M3 8.500h7" stroke="#000" />
      </svg>
      <svg viewBox="0 0 14 14" className="ml-2 size-[14px]">
        <circle cx="7" cy="7" r="7" fill="#8a8a8a" />
        <path d="M4 4l6 6M10 4l-6 6" stroke="#111" strokeWidth="2" />
      </svg>
      <div className="mr-[11px] ml-[14px] text-center text-[11px] leading-[17px]">
        <div>10:56</div>
        <div>2016/04/27</div>
      </div>
      <span className="mr-1 h-10 w-px bg-[#555]" />
    </div>
  );
}

function Taskbar() {
  return (
    <footer className="flex h-10 shrink-0 items-center bg-[#010207]">
      <button type="button" aria-label="Start" className="flex w-12 justify-center">
        <svg viewBox="0 0 16 16" className="size-4" fill="#fff">
          <path d="M0 2.200l6.500-.9v6.200H0zM7.500 1.200L16 0v7.500H7.500zM0 8.500h6.500v6.200L0 13.800zM7.500 8.500H16V16l-8.500-1.200z" />
        </svg>
      </button>
      <input
        aria-label="Search"
        placeholder="WebとWindowsを検索"
        className="h-full w-[344px] bg-[#333] px-[9px] text-sm placeholder:text-[#a3a3a3]"
      />
      {taskbarApps.map(({ name, open, active, stacked, icon }) => (
        <button
          key={name}
          type="button"
          aria-label={name}
          className={clsx("relative flex h-full w-[49px] items-center justify-center", active && "bg-[#343538]")}
        >
          <svg viewBox="0 0 24 24" className="size-[22px] overflow-visible">
            {icon}
          </svg>
          {open && (
            <span className={clsx("absolute bottom-0 flex h-0.5 bg-[#76b9ed]", active ? "inset-x-0" : "inset-x-1")}>
              {stacked && <span className="ml-auto w-2 border-l border-black bg-[#4d7ba0]" />}
            </span>
          )}
        </button>
      ))}
      <Tray />
    </footer>
  );
}

export default function App() {
  return (
    <div className="flex h-screen flex-col overflow-hidden bg-[#5d5a5d] font-['Open_Sans','Noto_Sans_CJK_JP',sans-serif] leading-4">
      <BrowserChrome />
      <main className="relative flex min-h-0 flex-1 flex-col overflow-hidden">
        <TopNav />
        <div className="flex min-h-0 flex-1">
          <Sidebar />
          <Workspace />
        </div>
        <ExportDialog />
        <LimitedAccessDialog />
        <div className="absolute bottom-0 left-0 z-30 flex h-[21px] w-1/3 items-center rounded-tr-sm bg-[#dfdfdf] pl-[3px] text-[11px] text-[#777]">
          https://app-lon04.marketo.com/#
        </div>
      </main>
      <Taskbar />
    </div>
  );
}
